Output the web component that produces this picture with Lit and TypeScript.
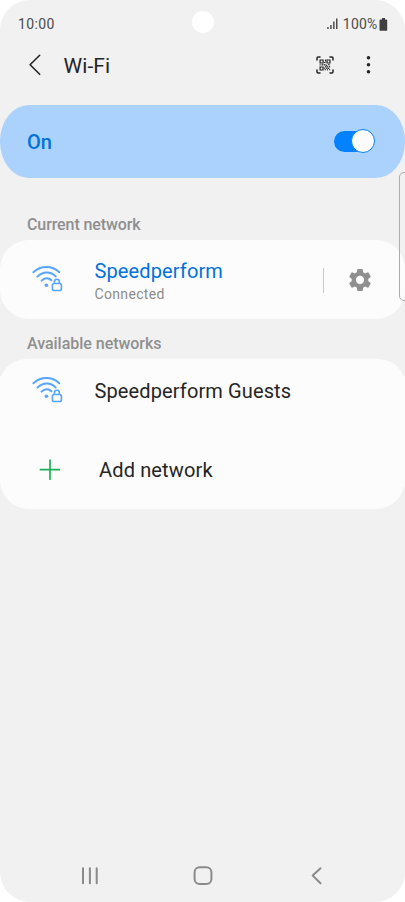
import { LitElement, html, svg, css } from "lit";
import { customElement, property } from "lit/decorators.js";

@customElement("wifi-signal")
class WifiSignal extends LitElement {
  static styles = css`
    :host { display: block; width: 32px; height: 28px; }
    svg { display: block; }
  `;
  render() {
    return html`<svg width="32" height="28" viewBox="0 0 32 28" fill="none" stroke="#57a5fb" stroke-width="2" stroke-linecap="round">
      <path d="M1.4 7.2C9.2 .4 20 .4 27.2 7.2M5.4 11.6C10.8 6.2 18.800 6 23.600 11.4M9.600 15.6C12.600 12.6 16.8 12.6 19.4 15.2"/>
      <circle cx="14.4" cy="20.2" r="1.8" fill="#57a5fb" stroke="none"/>
      <rect x="20.4" y="18.5" width="9" height="7" rx="1.8" stroke-width="1.6"/>
      <path d="M22.4 18.2v-1.3a2.500 2.6 0 0 1 5 0v1.3" stroke-width="1.6"/>
    </svg>`;
  }
}

@customElement("toggle-switch")
class ToggleSwitch extends LitElement {
  static styles = css`
    :host { display: flex; align-items: center; width: 41px; height: 25px; }
    .track { display: flex; align-items: center; justify-content: flex-end; width: 100%; height: 21px; border-radius: 11px; background: linear-gradient(90deg, #0381fe 34px, transparent 34px); }
    .thumb { flex: none; box-sizing: border-box; width: 24.5px; height: 24.5px; border-radius: 50%; border: 1px solid #0381fe; background: #fcfcfc; }
  `;
  render() {
    return html`<div class="track"><div class="thumb"></div></div>`;
  }
}

@customElement("network-row")
class NetworkRow extends LitElement {
  @property() name = "";
  @property() status = "";
  static styles = css`
    :host { display: flex; align-items: flex-start; }
    wifi-signal { flex: none; margin: -3px 30.5px 0 0; }
    wifi-signal.centered { margin-top: 6.5px; }
    .name { font-size: 20px; line-height: 24px; letter-spacing: .12px; color: #252525; }
    .connected { color: #0072de; }
    .status { font-size: 14px; line-height: 18px; margin-top: 2px; color: #8c8c8c; letter-spacing: .33px; }
  `;
  render() {
    return html`<wifi-signal class=${this.status ? "centered" : ""}></wifi-signal>
      <div>
        <div class="name ${this.status ? "connected" : ""}">${this.name}</div>
        ${this.status ? html`<div class="status">${this.status}</div>` : ""}
      </div>`;
  }
}

const qrCells: [number, number, number, number][] = [
  [9, 3.5, 1, 2], [8, 6, 1.5, 1], [3.5, 8.4, 1.3, 1], [5.5, 8.2, 2, 1.2], [8.2, 8, 1.3, 1.6],
  [10, 8.7, 1.2, 1.3], [12, 8.2, 1.7, 1], [9, 10, 1.4, 1.4], [11, 10.2, 1.3, 1.3],
  [13.1, 9.8, 1, 1.6], [8.2, 11.5, 1, 1.3], [10, 11.7, 1.5, 1.2], [12, 11.7, 1.2, 1.2],
  [8.7, 13.2, 1.4, 1], [11, 13.2, 1, 1.2], [13, 13.2, 1.2, 1],
];

@customElement("app-root")
class AppRoot extends LitElement {
  static styles = css`
    :host { display: block; width: 405px; height: 902px; background: #fff; font-family: Roboto, "Noto Sans", sans-serif; }
    * { box-sizing: border-box; }
    svg { display: block; flex: none; }
    .screen { position: relative; display: flex; flex-direction: column; width: 405px; height: 902px; background: #f1f1f1; border-radius: 30px; overflow: hidden; }
    .status-bar { display: flex; align-items: center; height: 46px; padding: 2px 17px 0 18px; font-size: 14px; color: #4c4c4c; }
    .time { width: 37px; letter-spacing: .35px; }
    .camera { width: 22px; height: 22px; border-radius: 50%; background: #fff; margin: -4px 0 0 136.5px; }
    .indicators { display: flex; align-items: center; margin-left: auto; }
    .percent { margin: 0 1.5px 0 4.5px; letter-spacing: .2px; }
    .header { display: flex; align-items: center; height: 59px; padding: 0 30px 22px 27px; }
    .title { margin: 2px 0 0 20.5px; font-size: 21px; letter-spacing: .1px; color: #252525; }
    .actions { display: flex; align-items: center; margin-left: auto; gap: 29px; }
    .power { display: flex; align-items: center; justify-content: space-between; height: 73px; padding: 0 30px 1px 27px; border-radius: 29px / 36px; background: #abd2fc; }
    .power-label { padding-top: 1px; font-size: 20px; font-weight: 500; color: #0072de; }
    .section { height: 62px; padding: 35.5px 27px 0; font-size: 16px; font-weight: 500; line-height: 22px; letter-spacing: -.1px; color: #8f8f8f; }
    .section.compact { height: 40px; padding-top: 14px; letter-spacing: -.03px; }
    .card { background: #fcfcfc; border-radius: 29px; }
    .current { display: flex; align-items: flex-start; justify-content: space-between; height: 79px; padding: 18.5px 33px 0 32px; }
    .current-actions { display: flex; align-items: center; gap: 24px; padding-top: 9px; }
    .rule { width: 1.5px; height: 25px; background: #cacaca; }
    .list { clip-path: path("M0 17H1.5C6 6 15 0 29 0H376C390 0 399 6 403.5 17H405V121A29 29 0 0 1 376 150H29A29 29 0 0 1 0 121Z"); background: #fcfcfc; height: 150px; }
    .guest { padding: 20px 32px 0; }
    .add { display: flex; align-items: center; height: 24px; margin-top: 54px; padding-left: 38.5px; font-size: 20px; letter-spacing: .15px; color: #252525; gap: 39.5px; }
    .nav { display: flex; align-items: center; justify-content: space-between; margin-top: auto; height: 52px; padding: 0 82px 0 80px; }
    .home { margin-left: -2px; }
    .edge { position: absolute; right: -12px; top: 172px; width: 18px; height: 129px; border: 1.5px solid #acacac; border-radius: 5px; }
  `;

  render() {
    return html`<div class="screen">
      <div class="status-bar">
        <span class="time">10:00</span>
        <div class="camera"></div>
        <div class="indicators">
          <svg width="11" height="12" viewBox="0 0 11 12" fill="#4c4c4c"><path d="M.2 9h1.5v2H.2zM3.200 7h1.500v4H3.200zM6.100 3.500h1.500V11H6.100zM9 .5h1.500V11H9z"/></svg>
          <span class="percent">100%</span>
          <svg width="9" height="13" viewBox="0 0 9 12" preserveAspectRatio="none" fill="#404040"><path d="M3 0h3v1.300h1.200q1 0 1 1V11q0 .800-.8.800H1.300Q.5 11.800.5 11V2.300q0-1 1-1H3z"/></svg>
        </div>
      </div>
      <div class="header">
        <svg width="16" height="24" viewBox="0 0 16 24" fill="none" stroke="#252525" stroke-width="1.600" stroke-linecap="round" stroke-linejoin="round"><path d="M12.700 2.300L3.100 11.700L12.700 21.300"/></svg>
        <span class="title">Wi-Fi</span>
        <div class="actions">
          <svg width="18" height="18" viewBox="0 0 18 18" fill="none" stroke="#252525">
            <path stroke-width="1.500" stroke-linecap="round" stroke-linejoin="round" d="M1 4V2.200Q1 1 2.200 1H4M14 1h1.800Q17 1 17 2.200V4M1 14v1.800Q1 17 2.200 17H4M14 17h1.800Q17 17 17 15.800V14"/>
            <path stroke-width="1.200" d="M4.100 4h3v3h-3zM11 4h3v3h-3zM4.100 11h3v3h-3z"/>
            <g fill="#252525" stroke="none">${qrCells.map(([x, y, w, h]) => svg`<rect x=${x} y=${y} width=${w} height=${h} />`)}</g>
          </svg>
          <svg width="12" height="20" viewBox="0 0 12 20" fill="#252525"><circle cx="5.500" cy="2.800" r="1.800"/><circle cx="5.500" cy="9.700" r="1.800"/><circle cx="5.500" cy="16.700" r="1.800"/></svg>
        </div>
      </div>
      <div class="power"><span class="power-label">On</span><toggle-switch></toggle-switch></div>
      <div class="section">Current network</div>
      <div class="card current">
        <network-row name="Speedperform" status="Connected"></network-row>
        <div class="current-actions">
          <div class="rule"></div>
          <svg width="24" height="24" viewBox="1.600 1.600 20.800 20.800" fill="#8f8f8f"><path d="M19.140 12.940c.04-.3.060-.61.060-.94 0-.32-.02-.64-.07-.94l2.030-1.580c.18-.14.230-.41.120-.61l-1.920-3.320c-.12-.22-.37-.29-.59-.22l-2.390.96c-.5-.38-1.030-.7-1.620-.94l-.36-2.540c-.04-.24-.24-.41-.48-.41h-3.840c-.24 0-.43.170-.47.410l-.36 2.540c-.59.240-1.130.570-1.620.940l-2.390-.96c-.22-.08-.47 0-.59.220L2.740 8.870c-.12.210-.08.470.12.610l2.030 1.580c-.05.3-.09.630-.09.940s.02.640.07.940l-2.030 1.580c-.18.140-.23.410-.12.610l1.920 3.320c.12.220.37.290.59.220l2.390-.96c.5.380 1.030.7 1.620.940l.36 2.540c.05.240.24.410.48.410h3.840c.24 0 .44-.17.470-.41l.36-2.540c.59-.24 1.130-.56 1.620-.94l2.390.96c.22.080.47 0 .59-.22l1.920-3.320c.12-.22.070-.47-.12-.61l-2.010-1.580zM12 15.600c-1.980 0-3.600-1.620-3.600-3.600s1.620-3.600 3.600-3.600 3.600 1.620 3.600 3.600-1.620 3.600-3.600 3.600z"/></svg>
        </div>
      </div>
      <div class="section compact">Available networks</div>
      <div class="list">
        <network-row class="guest" name="Speedperform Guests"></network-row>
        <div class="add">
          <svg width="21" height="22" viewBox="0 0 21 22" fill="none" stroke="#19b255" stroke-width="1.700" stroke-linecap="round"><path d="M11 1.200v19M1.400 10.700h19"/></svg>
          <span>Add network</span>
        </div>
      </div>
      <div class="nav">
        <svg width="18" height="20" viewBox="0 0 18 20" fill="none" stroke="#8a8a8a" stroke-width="2" stroke-linecap="round"><path d="M3 2.200v15M9.900 2.200v15M16.700 2.200v15"/></svg>
        <svg class="home" width="20" height="20" viewBox="0 0 20 20" fill="none" stroke="#8a8a8a" stroke-width="2"><rect x="1.600" y="1.300" width="16.800" height="16.800" rx="5"/></svg>
        <svg width="14" height="20" viewBox="0 0 14 20" fill="none" stroke="#8a8a8a" stroke-width="2" stroke-linecap="round" stroke-linejoin="round"><path d="M11.500 2.300L3.700 9.600L11.500 17.300"/></svg>
      </div>
      <div class="edge"></div>
    </div>`;
  }
}
